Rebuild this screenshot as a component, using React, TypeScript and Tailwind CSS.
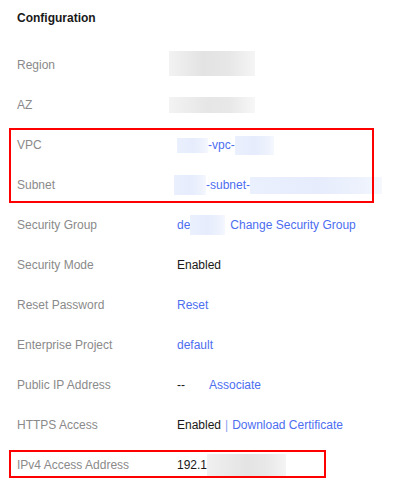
import React from "react";

const Blur = ({ w, h, tone }: { w: string; h: string; tone: "gray" | "blue" }) => (
  <span
    className={`inline-block ${w} ${h} ${
      tone === "gray"
        ? "bg-[linear-gradient(90deg,#f3f3f3,#e6e6e6_45%,#e9e9e9_70%,#f7f7f7)]"
        : "bg-[linear-gradient(90deg,#eaf0fd,#e6ecfc_50%,#edf2fd_85%,#f6f8fe)]"
    }`}
  />
);

const Row = ({ label, children }: { label: string; children?: React.ReactNode }) => (
  <div className="flex h-10 items-center">
    <div className="w-[160px] shrink-0 text-[#8a8a8a]">{label}</div>
    <div className="flex items-center">{children}</div>
  </div>
);

export default function App() {
  return (
    <div className="relative h-[490px] w-[419px] bg-white pl-[17px] text-[12px] leading-[18px] text-[#191919] [font-family:'Liberation_Sans',Arial,sans-serif]">
      <div className="pt-[9px] font-bold text-[#191919]">Configuration</div>
      <div className="mt-[18px]">
        <Row label="Region">
          <span className="-ml-2 -mt-1 inline-block h-[25px] w-[86px] bg-[linear-gradient(90deg,#f2f2f2,#e3e3e3_40%,#e7e7e7_70%,#f5f5f5)]" />
        </Row>
        <Row label="AZ">
          <span className="-ml-2 inline-block h-[16px] w-[86px] bg-[linear-gradient(90deg,#f3f3f3,#e6e6e6_45%,#e8e8e8_70%,#f7f7f7)]" />
        </Row>
        <Row label="VPC">
          <Blur w="w-[31px]" h="h-[15px]" tone="blue" />
          <span className="text-[#4d6ef0]">-vpc-</span>
          <Blur w="w-[39px]" h="h-[19px]" tone="blue" />
        </Row>
        <Row label="Subnet">
          <span className="-ml-[3px] flex items-center">
            <Blur w="w-[32px]" h="h-[20px]" tone="blue" />
            <span className="text-[#4d6ef0]">-subnet-</span>
            <Blur w="w-[132px]" h="h-[17px]" tone="blue" />
          </span>
        </Row>
        <Row label="Security Group">
          <span className="text-[#4d6ef0]">de</span>
          <Blur w="w-[35px]" h="h-[20px]" tone="blue" />
          <span className="ml-[5px] text-[#4d6ef0]">Change Security Group</span>
        </Row>
        <Row label="Security Mode">
          <span>Enabled</span>
        </Row>
        <Row label="Reset Password">
          <span className="text-[#4d6ef0]">Reset</span>
        </Row>
        <Row label="Enterprise Project">
          <span className="text-[#4d6ef0]">default</span>
        </Row>
        <Row label="Public IP Address">
          <span>--</span>
          <span className="ml-[24px] text-[#4d6ef0]">Associate</span>
        </Row>
        <Row label="HTTPS Access">
          <span>Enabled</span>
          <span className="ml-[4px] text-[#8aa0f0]">|</span>
          <span className="ml-[4px] text-[#4d6ef0]">Download Certificate</span>
        </Row>
        <Row label="IPv4 Access Address">
          <span>192.1</span>
          <span className="inline-block h-[23px] w-[79px] bg-[linear-gradient(90deg,#f0f0f0,#e4e4e4_50%,#e8e8e8_75%,#f4f4f4)]" />
        </Row>
      </div>
      <div className="pointer-events-none absolute left-[9px] top-[128px] h-[75px] w-[365px] border-2 border-[#ff0000]" />
      <div className="pointer-events-none absolute left-[9px] top-[450px] h-[28px] w-[317px] border-2 border-[#ff0000]" />
    </div>
  );
}
